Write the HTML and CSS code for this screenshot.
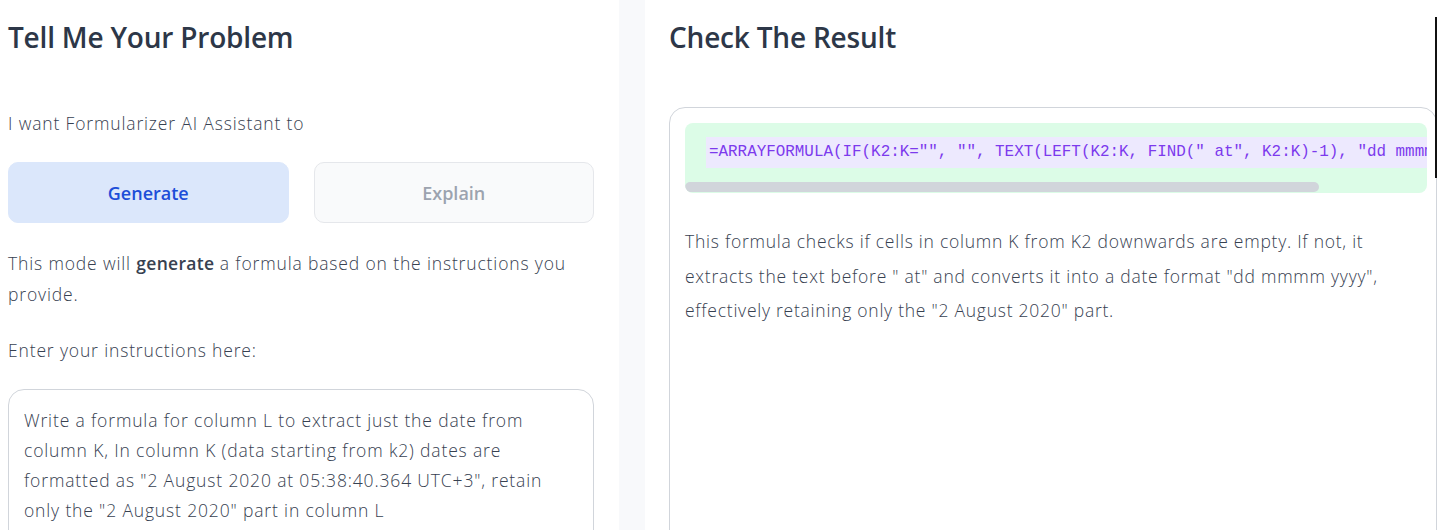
FILE: index.html
```html
<!DOCTYPE html>
<html lang="en">
<head>
  <meta charset="UTF-8">
  <meta name="viewport" content="width=device-width, initial-scale=1.0">
  <title>Formularizer</title>
  <link rel="stylesheet" href="styles.css">
</head>
<body>
  <main class="page">
    <section class="panel panel-left">
      <h2 class="panel-title">Tell Me Your Problem</h2>
      <p class="label">I want Formularizer AI Assistant to</p>
      <div class="modes">
        <button class="mode mode-active">Generate</button>
        <button class="mode">Explain</button>
      </div>
      <p class="hint">This mode will <strong>generate</strong> a formula based on the instructions you provide.</p>
      <p class="label">Enter your instructions here:</p>
      <div class="prompt">Write a formula for column L to extract just the date from column K, In column K (data starting from k2) dates are formatted as "2 August 2020 at 05:38:40.364 UTC+3", retain only the "2 August 2020" part in column L</div>
    </section>

    <div class="divider"></div>

    <section class="panel panel-right">
      <h2 class="panel-title">Check The Result</h2>
      <div class="result">
        <div class="code-box">
          <div class="code-scroll">
            <code class="formula">=ARRAYFORMULA(IF(K2:K="", "", TEXT(LEFT(K2:K, FIND(" at", K2:K)-1), "dd mmmm yyyy")))</code>
          </div>
          <div class="scroll-thumb"></div>
        </div>
        <p class="explain">This formula checks if cells in column K from K2 downwards are empty. If not, it extracts the text before " at" and converts it into a date format "dd mmmm yyyy", effectively retaining only the "2 August 2020" part.</p>
      </div>
    </section>
  </main>
  <div class="edge-line"></div>
</body>
</html>
```

FILE: styles.css
```css
:root {
  --title: #2d3748;
  --text: #374151;
  --border: #d1d5db;
}
* { box-sizing: border-box; margin: 0; padding: 0; }
html, body {
  width: 1437px; height: 530px;
  overflow: hidden;
  background: #fff;
  font-family: "Open Sans", Lato, sans-serif;
  color: var(--text);
}
.page { display: flex; align-items: stretch; height: 530px; }

/* Panels */
.panel { padding-top: 19px; min-width: 0; }
.panel-left { flex: 0 0 619px; padding-left: 8px; padding-right: 25px; }
.panel-right { flex: 0 0 792px; padding-left: 24px; }
.divider { flex: 0 0 26px; background: #f8f9fb; }
.panel-title {
  font-size: 28px; line-height: 36px; font-weight: 600;
  color: var(--title); letter-spacing: -0.2px;
}

/* Left side */
.label, .hint, .prompt, .explain {
  font-weight: 300; font-size: 17.5px; letter-spacing: 0.85px;
}
.label { line-height: 26px; margin-top: 55px; }
.modes { display: grid; grid-template-columns: 1fr 1fr; gap: 25px; margin-top: 26px; }
.mode {
  height: 61px; border-radius: 10px;
  border: 1px solid #e5e7eb; background: #f9fafb;
  font-family: inherit; font-size: 18px; font-weight: 600;
  color: #9ca3af;
}
.mode-active { background: #dbe7fb; border-color: #dbe7fb; color: #1d4ed8; }
.hint { line-height: 31px; margin-top: 25px; }
.hint strong { font-weight: 600; letter-spacing: 0.3px; }
.hint + .label { margin-top: 27px; }
.prompt {
  margin-top: 26px;
  border: 1px solid var(--border); border-radius: 16px;
  padding: 15px 15px 20px;
  line-height: 30px;
  height: 160px;
}

/* Right side */
.result {
  margin-top: 52px;
  height: 440px;
  border: 1px solid var(--border); border-radius: 16px;
  padding: 15px 9px 0 15px;
}
.code-box {
  background: #dcfce7; border-radius: 8px;
  padding: 14px 0 1px 21px;
  overflow: hidden;
}
.code-scroll { overflow: hidden; white-space: nowrap; }
.formula {
  display: inline-block;
  background: #ede9fe;
  padding: 0 3px;
  height: 31px; line-height: 31px;
  font-family: "Liberation Mono", "DejaVu Sans Mono", monospace;
  font-size: 15.9px; color: #7c3aed;
}
.scroll-thumb {
  width: 634px; height: 10px; margin: 14px 0 0 -21px;
  background: #d1d5db; border-radius: 5px;
}
.explain { margin-top: 31px; line-height: 34.5px; letter-spacing: 0.75px; }

/* stray caret line on the right edge */
.edge-line {
  position: absolute; left: 1435px; top: 17px;
  width: 2px; height: 161px; background: #111;
}
```
